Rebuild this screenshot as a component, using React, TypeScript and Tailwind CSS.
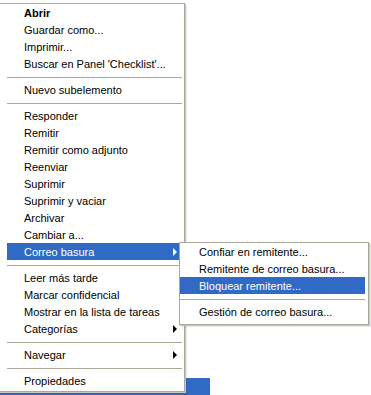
type Item = { label: string; bold?: boolean; sub?: boolean; active?: boolean } | "sep"

const mainItems: Item[] = [
  { label: "Abrir", bold: true },
  { label: "Guardar como..." },
  { label: "Imprimir..." },
  { label: "Buscar en Panel 'Checklist'..." },
  "sep",
  { label: "Nuevo subelemento" },
  "sep",
  { label: "Responder" },
  { label: "Remitir" },
  { label: "Remitir como adjunto" },
  { label: "Reenviar" },
  { label: "Suprimir" },
  { label: "Suprimir y vaciar" },
  { label: "Archivar" },
  { label: "Cambiar a..." },
  { label: "Correo basura", sub: true, active: true },
  "sep",
  { label: "Leer más tarde" },
  { label: "Marcar confidencial" },
  { label: "Mostrar en la lista de tareas" },
  { label: "Categorías", sub: true },
  "sep",
  { label: "Navegar", sub: true },
  "sep",
  { label: "Propiedades" },
]

const subItems: Item[] = [
  { label: "Confiar en remitente..." },
  { label: "Remitente de correo basura..." },
  { label: "Bloquear remitente...", active: true },
  "sep",
  { label: "Gestión de correo basura..." },
]

function Arrow({ white }: { white?: boolean }) {
  return (
    <span
      className={`w-0 h-0 border-y-[4px] border-y-transparent border-l-[4px] ${
        white ? "border-l-white" : "border-l-black"
      }`}
    />
  )
}

function MenuList({ items, textPad }: { items: Item[]; textPad: string }) {
  return (
    <>
      {items.map((it, i) =>
        it === "sep" ? (
          <div key={i} className="h-[9px] flex items-center">
            <div className="h-px w-full bg-[#aca899] mt-[1px]" />
          </div>
        ) : (
          <div
            key={i}
            className={`h-[17px] flex items-center justify-between pr-[5px] ${textPad} ${
              it.active ? "bg-[#316ac5] text-white" : "text-black"
            } ${it.bold ? "font-bold" : ""}`}
          >
            <span className="pt-[2px] whitespace-nowrap">{it.label}</span>
            {it.sub && <Arrow white={it.active} />}
          </div>
        )
      )}
    </>
  )
}

export default function App() {
  return (
    <div className="relative w-[371px] h-[395px] bg-white overflow-hidden text-[11px] leading-none font-['Liberation_Sans',Arial,sans-serif]">
      {/* selected list row behind the menu */}
      <div className="absolute left-0 top-[378px] w-[210px] h-[17px] bg-[#316ac5]" />

      <div className="absolute left-[-1px] top-[3px] w-[186px] bg-white border border-[#aca899] pb-[2px] shadow-[1px_1px_0_#c9c7bd,2px_2px_1px_rgba(0,0,0,0.08)]">
        <div className="ml-[7px] mr-[2px]">
          <MenuList items={mainItems} textPad="pl-[17px]" />
        </div>
      </div>

      <div className="absolute left-[179px] top-[242px] w-[190px] bg-white border border-[#aca899] pb-[4px] shadow-[1px_1px_0_#c9c7bd,2px_2px_1px_rgba(0,0,0,0.08)]">
        <div className="mr-[3px]">
          <MenuList items={subItems} textPad="pl-[19px]" />
        </div>
      </div>
    </div>
  )
}
